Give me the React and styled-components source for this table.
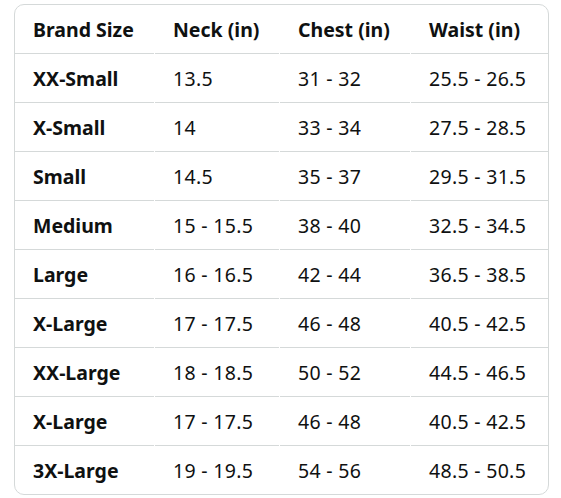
import React from "react";
import styled, { createGlobalStyle } from "styled-components";

const GlobalStyle = createGlobalStyle`
  body {
    margin: 0;
    background: #ffffff;
    font-family: "Noto Sans", "Open Sans", sans-serif;
    color: #0f1111;
  }
`;

const Page = styled.div`
  padding: 4px 0 0 14px;
`;

const Card = styled.div`
  width: 533px;
  border: 1px solid #d5d9d9;
  border-radius: 10px;
  overflow: hidden;
`;

const Table = styled.div`
  display: grid;
  grid-template-columns: 139px 124px 130px 137px;
  column-gap: 1px;
`;

const Cell = styled.div`
  height: 48px;
  display: flex;
  align-items: center;
  padding-left: 18px;
  font-size: 19.5px;
  font-weight: ${(p) => (p.bold ? 700 : 400)};
  letter-spacing: ${(p) => (p.bold ? "0" : "0.3px")};
  border-bottom: ${(p) => (p.last ? "none" : "1px solid #d5d9d9")};
  white-space: nowrap;
`;

const headers = ["Brand Size", "Neck (in)", "Chest (in)", "Waist (in)"];

const rows = [
  ["XX-Small", "13.5", "31 - 32", "25.5 - 26.5"],
  ["X-Small", "14", "33 - 34", "27.5 - 28.5"],
  ["Small", "14.5", "35 - 37", "29.5 - 31.5"],
  ["Medium", "15 - 15.5", "38 - 40", "32.5 - 34.5"],
  ["Large", "16 - 16.5", "42 - 44", "36.5 - 38.5"],
  ["X-Large", "17 - 17.5", "46 - 48", "40.5 - 42.5"],
  ["XX-Large", "18 - 18.5", "50 - 52", "44.5 - 46.5"],
  ["X-Large", "17 - 17.5", "46 - 48", "40.5 - 42.5"],
  ["3X-Large", "19 - 19.5", "54 - 56", "48.5 - 50.5"],
];

const App = () => {
  return (
    <Page>
      <GlobalStyle />
      <Card>
        <Table>
          {headers.map((h) => (
            <Cell key={h} bold>
              {h}
            </Cell>
          ))}
          {rows.map((row, i) =>
            row.map((value, j) => (
              <Cell
                key={i + "-" + j}
                bold={j === 0}
                last={i === rows.length - 1}
              >
                {value}
              </Cell>
            ))
          )}
        </Table>
      </Card>
    </Page>
  );
};

export default App;
